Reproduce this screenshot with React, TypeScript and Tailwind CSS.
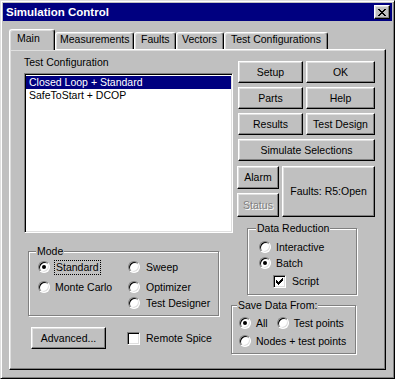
import type { ReactNode } from 'react'

const RAISED =
  'border border-t-white border-l-white border-r-black border-b-black shadow-[inset_-1px_-1px_0_#808080,inset_1px_1px_0_#dfdfdf]'
const SUNKEN =
  'border border-t-[#808080] border-l-[#808080] border-r-white border-b-white shadow-[inset_1px_1px_0_#000,inset_-1px_-1px_0_#dfdfdf]'

function Btn({ children, className = '', disabled = false }: { children: ReactNode; className?: string; disabled?: boolean }) {
  return (
    <div className={`${RAISED} flex items-center justify-center bg-[#c0c0c0] leading-[13px] ${className}`}>
      <span className={disabled ? 'text-[#808080] [text-shadow:1px_1px_0_#fff]' : ''}>{children}</span>
    </div>
  )
}

function Radio({ checked = false }: { checked?: boolean }) {
  return (
    <span className="flex size-[12px] shrink-0 items-center justify-center rounded-full border border-t-[#808080] border-l-[#808080] border-r-white border-b-white bg-white shadow-[inset_1px_1px_0_#000,inset_-1px_-1px_0_#dfdfdf]">
      {checked && <span className="size-[4px] rounded-full bg-black" />}
    </span>
  )
}

function Check({ checked = false }: { checked?: boolean }) {
  return (
    <span className={`${SUNKEN} flex size-[13px] shrink-0 items-center justify-center bg-white`}>
      {checked && (
        <svg width="7" height="7" viewBox="0 0 7 7" shapeRendering="crispEdges">
          <path
            fill="#000"
            d="M6 0h1v1H6zM5 1h2v1H5zM0 2h1v1H0zM4 2h3v1H4zM0 3h2v1H0zM3 3h3v1H3zM0 4h5v1H0zM1 5h3v1H1zM2 6h1v1H2z"
          />
        </svg>
      )}
    </span>
  )
}

function RadioRow({ label, checked, className = '' }: { label: ReactNode; checked?: boolean; className?: string }) {
  return (
    <div className={`flex h-[12px] items-center gap-[5px] leading-[13px] ${className}`}>
      <Radio checked={checked} />
      <span className="whitespace-nowrap">{label}</span>
    </div>
  )
}

function Group({ label, labelLeft, className = '', children }: { label: string; labelLeft: string; className?: string; children: ReactNode }) {
  return (
    <div className={`relative border border-[#808080] shadow-[inset_1px_1px_0_#fff,1px_1px_0_#fff] ${className}`}>
      <span className={`absolute -top-[7px] ${labelLeft} bg-[#c0c0c0] px-[1px] leading-[13px] whitespace-nowrap`}>{label}</span>
      {children}
    </div>
  )
}

function Tab({ label, selected = false, className = '' }: { label: string; selected?: boolean; className?: string }) {
  return (
    <div
      className={`flex rounded-t-[3px] border-t border-l border-r border-t-white border-l-white border-r-black bg-[#c0c0c0] leading-[13px] whitespace-nowrap shadow-[inset_-1px_0_0_#808080,inset_1px_1px_0_#dfdfdf] ${
        selected ? 'relative z-10 -mb-[1px] h-[21px] pt-[2px]' : 'h-[17px]'
      } ${className}`}
    >
      {label}
    </div>
  )
}

export default function App() {
  return (
    <div className="flex h-[379px] w-[395px] flex-col border border-t-[#dfdfdf] border-l-[#dfdfdf] border-r-black border-b-black bg-[#c0c0c0] p-[2px] font-['Liberation_Sans',Arial,sans-serif] text-[10.5px] text-black shadow-[inset_1px_1px_0_#fff,inset_-1px_-1px_0_#808080]">
      {/* title bar */}
      <div className="flex h-[18px] shrink-0 items-center justify-between bg-[#000080] pr-[2px] pl-[3px]">
        <span className="-mt-[1px] text-[11.5px] leading-[14px] font-bold text-white">Simulation Control</span>
        <div className={`${RAISED} flex h-[14px] w-[16px] items-center justify-center bg-[#c0c0c0]`}>
          <svg width="8" height="7" viewBox="0 0 8 7" shapeRendering="crispEdges">
            <path
              fill="#000"
              d="M0 0h2v1H0zM6 0h2v1H6zM1 1h2v1H1zM5 1h2v1H5zM2 2h4v1H2zM3 3h2v1H3zM2 4h4v1H2zM1 5h2v1H1zM5 5h2v1H5zM0 6h2v1H0zM6 6h2v1H6z"
            />
          </svg>
        </div>
      </div>

      {/* tabs */}
      <div className="mt-[8px] ml-[6px] flex h-[20px] items-end">
        <Tab label="Main" selected className="w-[46px] pl-[7px]" />
        <Tab label="Measurements" className="w-[79px] pl-[4px]" />
        <Tab label="Faults" className="w-[42px] pl-[6px]" />
        <Tab label="Vectors" className="w-[48px] pl-[5px]" />
        <Tab label="Test Configurations" className="w-[104px] pl-[6px]" />
      </div>

      {/* panel */}
      <div className="ml-[6px] flex h-[321px] w-[377px] border border-t-white border-l-white border-r-black border-b-black pl-[14px] shadow-[inset_-1px_-1px_0_#808080,inset_1px_1px_0_#dfdfdf]">
        {/* left column */}
        <div className="flex w-[209px] flex-col">
          <div className="mt-[6px] h-[13px] leading-[13px]">Test Configuration</div>
          <div className={`${SUNKEN} mt-[4px] h-[160px] w-[209px] bg-white px-[1px] pt-[2px]`}>
            <div className="h-[13px] bg-[#000080] pl-[3px] leading-[13px] text-white">Closed Loop + Standard</div>
            <div className="h-[13px] pl-[3px] leading-[13px]">SafeToStart + DCOP</div>
          </div>

          <Group label="Mode" labelLeft="left-[7px]" className="mt-[18px] ml-[4px] flex h-[65px] w-[191px] pt-[9px]">
            <div className="ml-[9px] w-[90px]">
              <div className="flex h-[12px] items-center gap-[4px] leading-[13px]">
                <Radio checked />
                <span className="border border-dotted border-black px-[1px]">Standard</span>
              </div>
              <RadioRow label="Monte Carlo" className="mt-[8px]" />
            </div>
            <div>
              <RadioRow label="Sweep" className="gap-[6px]" />
              <RadioRow label="Optimizer" className="mt-[8px] gap-[6px]" />
              <RadioRow label="Test Designer" className="mt-[4px] gap-[6px]" />
            </div>
          </Group>

          <div className="mt-[11px] flex items-center">
            <Btn className="ml-[7px] h-[22px] w-[75px]">Advanced...</Btn>
            <div className="mt-[1px] ml-[21px] flex items-center gap-[6px] leading-[13px]">
              <Check />
              <span>Remote Spice</span>
            </div>
          </div>
        </div>

        {/* right column */}
        <div className="ml-[4px] flex w-[138px] flex-col">
          <div className="mt-[11px] ml-[1px] grid grid-cols-[65px_69px] gap-x-[3px] gap-y-[4px]">
            <Btn className="h-[22px]">Setup</Btn>
            <Btn className="h-[22px]">OK</Btn>
            <Btn className="h-[22px]">Parts</Btn>
            <Btn className="h-[22px]">Help</Btn>
            <Btn className="h-[22px]">Results</Btn>
            <Btn className="h-[22px]">Test Design</Btn>
            <Btn className="col-span-2 h-[22px]">Simulate Selections</Btn>
          </div>

          <div className="mt-[5px] flex gap-[3px]">
            <div className="flex w-[42px] flex-col gap-[4px]">
              <Btn className="h-[23px]">Alarm</Btn>
              <Btn className="h-[24px]" disabled>
                Status
              </Btn>
            </div>
            <Btn className="h-[51px] w-[93px]">Faults: R5:Open</Btn>
          </div>

          <Group label="Data Reduction" labelLeft="left-[8px]" className="mt-[11px] ml-[10px] h-[67px] w-[110px] pt-[12px]">
            <RadioRow label="Interactive" className="ml-[11px]" />
            <RadioRow label="Batch" checked className="mt-[4px] ml-[11px]" />
            <div className="mt-[6px] ml-[25px] flex items-center gap-[6px] leading-[13px]">
              <Check checked />
              <span>Script</span>
            </div>
          </Group>

          <Group label="Save Data From:" labelLeft="left-[5px]" className="mt-[10px] -ml-[6px] h-[49px] w-[125px] pt-[11px]">
            <div className="ml-[7px] flex">
              <RadioRow label="All" checked />
              <RadioRow label="Test points" className="ml-[9px] gap-[4px]" />
            </div>
            <RadioRow label="Nodes + test points" className="mt-[6px] ml-[7px]" />
          </Group>
        </div>
      </div>
    </div>
  )
}
